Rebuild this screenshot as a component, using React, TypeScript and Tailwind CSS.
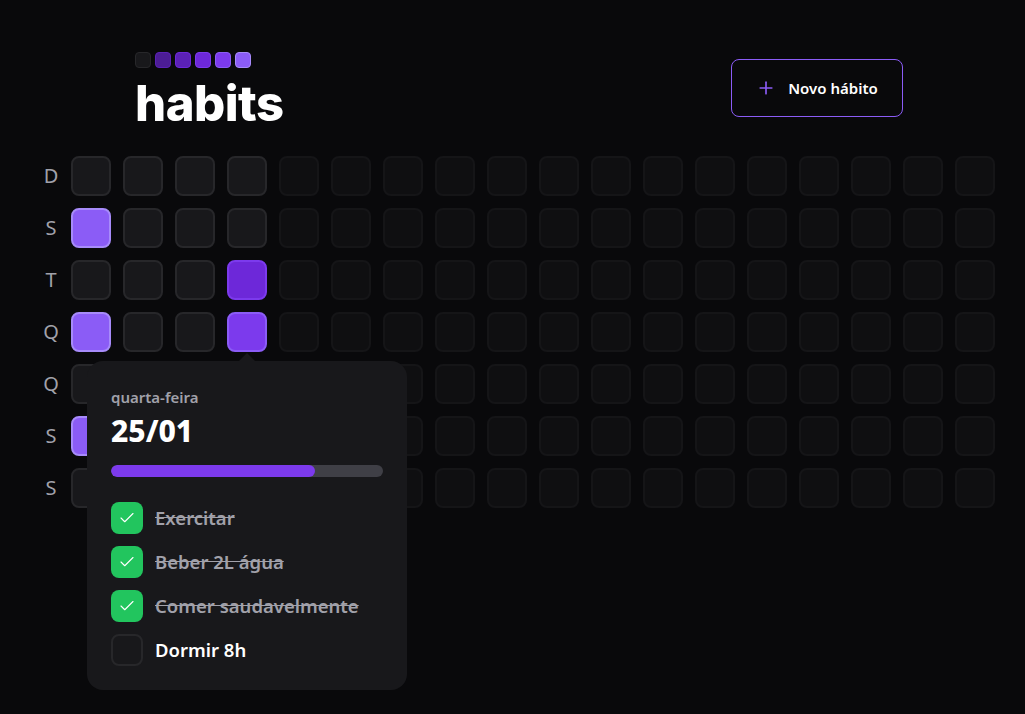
import React from 'react';
import { Plus, Check } from 'lucide-react';

const weekDays = ['D', 'S', 'T', 'Q', 'Q', 'S', 'S'];

type CellKind = 'future' | 'empty' | 'l5' | 'l4' | 'l3';

const cellClass: Record<CellKind, string> = {
  future: 'bg-[#18181b] border-[#27272a] opacity-40',
  empty: 'bg-[#18181b] border-[#27272a]',
  l5: 'bg-[#8b5cf6] border-[#a78bfa]',
  l4: 'bg-[#7c3aed] border-[#8b5cf6]',
  l3: 'bg-[#6d28d9] border-[#7c3aed]',
};

const COLUMNS = 18;

function getKind(col: number, row: number): CellKind {
  if (col === 0 && (row === 1 || row === 3 || row === 5)) return 'l5';
  if (col === 3 && row === 2) return 'l3';
  if (col === 3 && row === 3) return 'l4';
  if (col < 3) return 'empty';
  if (col === 3 && row < 4) return 'empty';
  return 'future';
}

const habits = [
  { title: 'Exercitar', done: true },
  { title: 'Beber 2L água', done: true },
  { title: 'Comer saudavelmente', done: true },
  { title: 'Dormir 8h', done: false },
];

const legend = [
  'bg-[#18181b] border-[#27272a]',
  'bg-[#4c1d95] border-[#5b21b6]',
  'bg-[#5b21b6] border-[#6d28d9]',
  'bg-[#6d28d9] border-[#7c3aed]',
  'bg-[#7c3aed] border-[#8b5cf6]',
  'bg-[#8b5cf6] border-[#a78bfa]',
];

export default function App() {
  const cells: { col: number; row: number }[] = [];
  for (let col = 0; col < COLUMNS; col++) {
    for (let row = 0; row < 7; row++) cells.push({ col, row });
  }

  return (
    <div className="relative min-h-screen w-full bg-[#09090b] text-white font-['Noto_Sans',sans-serif] overflow-hidden">
      <header className="ml-[135px] w-[768px] pt-[52px] flex items-center justify-between">
        <div className="flex flex-col gap-[13px]">
          <div className="flex gap-1">
            {legend.map((c, i) => (
              <div key={i} className={`w-4 h-4 rounded-[4px] border ${c}`} />
            ))}
          </div>
          <h1 className="font-['Inter',sans-serif] text-[49px] leading-[45px] font-extrabold tracking-[-0.01em]">habits</h1>
        </div>
        <button className="w-[172px] h-[58px] -mt-[2px] flex items-center justify-center gap-3 border border-[#8b5cf6] rounded-lg font-semibold text-[15px]">
          <Plus size={20} className="text-[#8b5cf6]" strokeWidth={2} />
          Novo hábito
        </button>
      </header>

      <div className="flex mt-[30px] ml-[31px]">
        <div className="flex flex-col gap-3 w-10">
          {weekDays.map((d, i) => (
            <div key={i} className="h-10 flex items-center justify-center text-xl text-[#a1a1aa]">
              {d}
            </div>
          ))}
        </div>
        <div className="grid grid-rows-7 grid-flow-col gap-3">
          {cells.map(({ col, row }) => (
            <div key={`${col}-${row}`} className={`w-10 h-10 rounded-lg border-2 ${cellClass[getKind(col, row)]}`} />
          ))}
        </div>
      </div>

      <div className="absolute left-[87px] top-[361px] w-[320px] h-[329px] rounded-2xl bg-[#18181b] px-6 pt-[26px] flex flex-col">
        <div className="absolute -top-2 left-[152px] w-0 h-0 border-x-8 border-x-transparent border-b-8 border-b-[#18181b]" />
        <span className="font-semibold text-[#a1a1aa] text-[15px] leading-5">quarta-feira</span>
        <span className="mt-[6px] font-extrabold text-[30px] leading-[36px]">25/01</span>
        <div className="mt-4 h-3 w-full rounded-full bg-[#3f3f46] overflow-hidden">
          <div className="h-3 rounded-full bg-[#7c3aed]" style={{ width: '75%' }} />
        </div>
        <div className="mt-[25px] flex flex-col gap-3">
          {habits.map((h) => (
            <div key={h.title} className="flex items-center gap-3">
              <div
                className={`w-8 h-8 rounded-lg flex items-center justify-center ${
                  h.done ? 'bg-[#22c55e]' : 'bg-[#18181b] border-2 border-[#27272a]'
                }`}
              >
                {h.done && <Check size={18} strokeWidth={1.5} className="text-white" />}
              </div>
              <span className={`font-semibold text-[18.5px] ${h.done ? 'line-through text-[#a1a1aa]' : 'text-white'}`}>
                {h.title}
              </span>
            </div>
          ))}
        </div>
      </div>
    </div>
  );
}
